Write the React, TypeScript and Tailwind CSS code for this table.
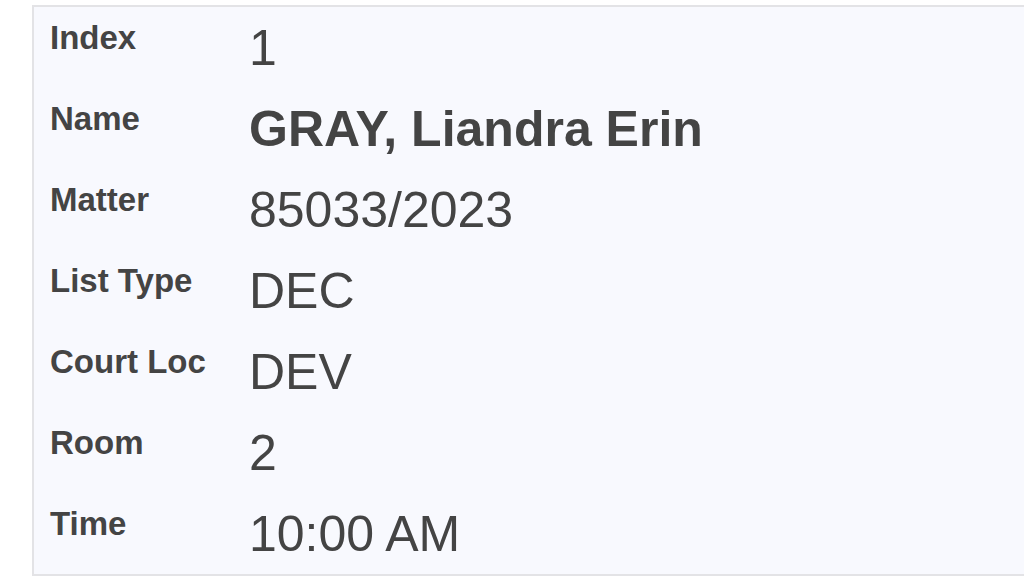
import React from 'react';

const rows: { label: string; value: string; bold?: boolean }[] = [
  { label: 'Index', value: '1' },
  { label: 'Name', value: 'GRAY, Liandra Erin', bold: true },
  { label: 'Matter', value: '85033/2023' },
  { label: 'List Type', value: 'DEC' },
  { label: 'Court Loc', value: 'DEV' },
  { label: 'Room', value: '2' },
  { label: 'Time', value: '10:00 AM' },
];

const App = () => {
  return (
    <div className="w-[1024px] h-[576px] overflow-hidden bg-white pt-[5px] pl-[32px] font-['Liberation_Sans',Arial,sans-serif] text-[#444444]">
      {/* Detail card, runs off the right edge */}
      <div className="w-[1010px] border-l-2 border-t-2 border-b-2 border-[#e3e3e6] bg-[#f8f9fe] pl-[16px]">
        {rows.map((r) => (
          <div key={r.label} className="flex items-start py-[10.5px]">
            <div className="w-[199px] shrink-0 text-[33px] font-bold leading-[1.2]">{r.label}</div>
            <div className={`text-[50px] leading-[1.2] ${r.bold ? 'font-bold' : 'font-normal'}`}>{r.value}</div>
          </div>
        ))}
      </div>
    </div>
  );
};

export default App;
